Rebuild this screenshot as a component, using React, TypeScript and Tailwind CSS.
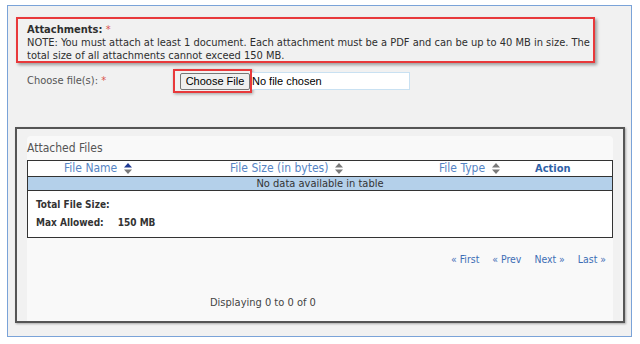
import React from "react"

const font = { fontFamily: "'DejaVu Sans Condensed', 'DejaVu Sans', sans-serif" }
const arial = { fontFamily: "'Liberation Sans', Arial, sans-serif" }

const SortIcon = ({ up = "#7a7a7a", down = "#7a7a7a" }: { up?: string; down?: string }) => (
	<svg width="8" height="11" viewBox="0 0 8 11" className="inline-block">
		<path d="M4 0 L8 4.5 L0 4.5 Z" fill={up} />
		<path d="M0 6.5 L8 6.5 L4 11 Z" fill={down} />
	</svg>
)

export default function App() {
	return (
		<div className="w-[640px] h-[344px] bg-white pt-[5px] pl-[7px] text-[#444]" style={font}>
			<div className="w-[625px] h-[332px] border border-[#7aa3d8] bg-[#f1f1f1] px-[8px] pt-[11px]">
				{/* note box */}
				<div className="w-[579px] h-[46px] border-2 border-[#e8393b] shadow-[2px_2px_3px_rgba(0,0,0,0.35)] pl-[9px] pt-[4px] text-[11px] leading-[13px] text-[#2e2e2e]">
					<div className="font-bold">
						Attachments: <span className="text-[#d9534f] font-normal">*</span>
					</div>
					<div>
						NOTE: You must attach at least 1 document. Each attachment must be a PDF and can be up to 40 MB in size. The total size of all attachments cannot exceed 150 MB.
					</div>
				</div>

				{/* choose file row */}
				<div className="flex items-start mt-[6px] pl-[11px]">
					<div className="w-[146px] pt-[5px] text-[11px] leading-[13px] text-[#555]">
						Choose file(s): <span className="text-[#d9534f]">*</span>
					</div>
					<div className="w-[79px] h-[24px] border-2 border-[#e8393b] shadow-[1px_1px_3px_rgba(0,0,0,0.35)] pl-[5px] pt-[2px]">
						<div
							className="h-[17px] w-[70px] border border-[#767676] bg-[#efefef] rounded-[2px] text-[11px] leading-[15px] text-black text-center"
							style={arial}
						>
							Choose File
						</div>
					</div>
					<div
						className="mt-[3px] w-[158px] h-[18px] border border-l-0 border-[#c9e1f2] bg-white text-[11px] leading-[16px] text-black"
						style={arial}
					>
						No file chosen
					</div>
				</div>

				{/* attached files box */}
				<div className="mt-[34px] -ml-px w-[610px] h-[196px] border-2 border-[#555] shadow-[1px_1px_2px_rgba(0,0,0,0.3)] bg-[#f1f1f1] pt-[7px] px-[10px]">
					<div className="h-[185px] bg-[#f9f9f9] rounded-tl-[4px] rounded-tr-[4px]">
						<div className="pt-[5px] text-[12px] leading-[14px] text-[#555]">Attached Files</div>
						<div className="mt-[5px] border border-[#333] bg-white text-[12px]">
							<div className="flex items-center h-[15px] text-[#5584c4] leading-[15px]">
								<div className="w-[202px] flex items-center gap-[7px] pl-[36px]">
									<span>File Name</span>
									<SortIcon up="#1f3a93" />
								</div>
								<div className="w-[209px] flex items-center gap-[7px]">
									<span>File Size (in bytes)</span>
									<SortIcon />
								</div>
								<div className="w-[96px] flex items-center gap-[7px]">
									<span>File Type</span>
									<SortIcon />
								</div>
								<div className="flex-1 font-bold text-[11px] text-[#2f62a8]">Action</div>
							</div>
							<div className="h-[15px] border-y border-[#333] bg-[#b4d0ea] text-center text-[11px] leading-[13px] text-[#333]">
								No data available in table
							</div>
							<div className="h-[46px] pl-[8px] pt-[5px] text-[10px] leading-[18px] font-bold text-[#333]">
								<div>Total File Size:</div>
								<div>
									Max Allowed:<span className="ml-[14px]">150 MB</span>
								</div>
							</div>
						</div>

						<div className="flex justify-end gap-[13px] pr-[7px] mt-[15px] text-[10.4px] leading-[13px] text-[#3d6db5]">
							<span>« First</span>
							<span>« Prev</span>
							<span>Next »</span>
							<span>Last »</span>
						</div>

						<div className="mt-[30px] pl-[183px] text-[11px] leading-[13px] text-[#444]">Displaying 0 to 0 of 0</div>
					</div>
				</div>
			</div>
		</div>
	)
}
